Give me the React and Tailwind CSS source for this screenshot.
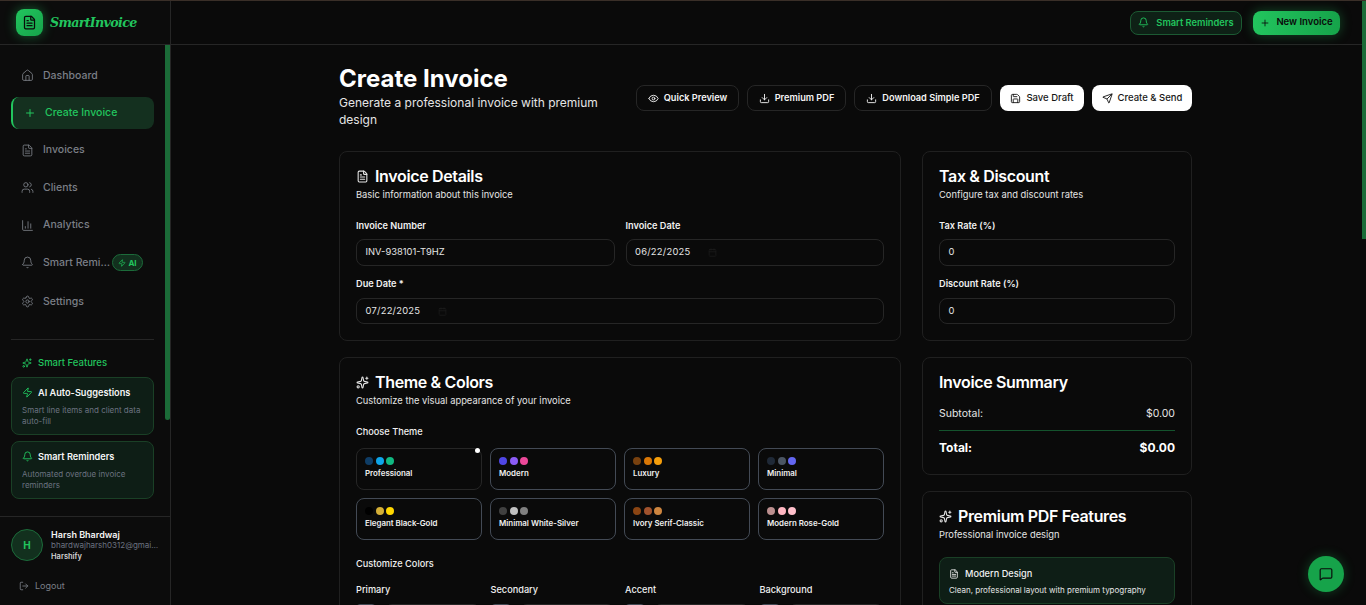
import React from "react";
import {
  Bell,
  ChartColumn,
  Calendar,
  Download,
  Eye,
  FileText,
  House,
  LogOut,
  MessageSquare,
  Plus,
  Save,
  Send,
  Settings,
  Sparkles,
  Users,
  Zap,
} from "lucide-react";

const navItems = [
  { label: "Dashboard", icon: House },
  { label: "Create Invoice", icon: Plus, active: true },
  { label: "Invoices", icon: FileText },
  { label: "Clients", icon: Users },
  { label: "Analytics", icon: ChartColumn },
  { label: "Smart Reminders", icon: Bell, badge: true },
  { label: "Settings", icon: Settings },
];

const themes = [
  { name: "Professional", colors: ["bg-[#0f3d66]", "bg-[#0ea5e9]", "bg-[#10b981]"], selected: true },
  { name: "Modern", colors: ["bg-[#4f46e5]", "bg-[#8b5cf6]", "bg-[#ec4899]"] },
  { name: "Luxury", colors: ["bg-[#78410f]", "bg-[#d97706]", "bg-[#f59e0b]"] },
  { name: "Minimal", colors: ["bg-[#1f2937]", "bg-[#4b5563]", "bg-[#6366f1]"] },
  { name: "Elegant Black-Gold", colors: ["bg-[#000000]", "bg-[#d4af37]", "bg-[#ffd700]"] },
  { name: "Minimal White-Silver", colors: ["bg-[#404040]", "bg-[#c0c0c0]", "bg-[#808080]"] },
  { name: "Ivory Serif-Classic", colors: ["bg-[#8b4513]", "bg-[#a0522d]", "bg-[#cd853f]"] },
  { name: "Modern Rose-Gold", colors: ["bg-[#bc8f8f]", "bg-[#ffb6c1]", "bg-[#ffc0cb]"] },
];

function Sidebar() {
  return (
    <aside className="flex h-full w-[171px] shrink-0 flex-col border-r border-[#262626] bg-[#0c0c0c]">
      <div className="flex h-[44px] shrink-0 items-center gap-[7px] border-b border-[#262626] pl-[16px]">
        <div className="flex h-[27px] w-[27px] items-center justify-center rounded-lg bg-gradient-to-br from-[#22c55e] to-[#16a34a] shadow-[0_0_12px_rgba(34,197,94,0.45)]">
          <FileText size={15} strokeWidth={2} className="text-[#0a0a0a]" />
        </div>
        <span className="font-['DejaVu_Serif'] text-[12.7px] font-bold italic tracking-[-0.7px] text-[#22c55e]">
          SmartInvoice
        </span>
      </div>

      <div className="relative min-h-0 flex-1 overflow-hidden">
        <div className="absolute right-0 top-0 h-[375px] w-[5px] rounded-b-full bg-[#1b6b38]" />
        <nav className="flex flex-col pl-[11px] pr-[16px] pt-[12px]">
          {navItems.map((item) => (
            <NavRow key={item.label} {...item} />
          ))}
        </nav>
        <div className="ml-[11px] mr-[16px] mt-[18px] border-t border-[#262626]" />
        <div className="flex items-center gap-[6px] pl-[22px] pt-[16px] text-[9.5px] font-medium text-[#22c55e]">
          <Sparkles size={10} />
          Smart Features
        </div>
        <div className="flex flex-col gap-[6px] pl-[11px] pr-[16px] pt-[7px]">
          <FeatureCard icon={Zap} title="AI Auto-Suggestions" text="Smart line items and client data auto-fill" />
          <FeatureCard icon={Bell} title="Smart Reminders" text="Automated overdue invoice reminders" />
        </div>
      </div>

      <div className="h-[89px] shrink-0 border-t border-[#262626] px-[11px] pt-[12px]">
        <div className="flex items-start gap-[8px]">
          <div className="flex h-[32px] w-[32px] shrink-0 items-center justify-center rounded-full border border-[#1c6b3a] bg-[#12301e] text-[10px] font-bold text-[#22c55e]">
            H
          </div>
          <div className="min-w-0 leading-[11px]">
            <p className="text-[9px] font-semibold text-[#f5f5f5]">Harsh Bhardwaj</p>
            <p className="w-[108px] truncate text-[8px] text-[#6b7280]">bhardwajharsh0312@gmail.com</p>
            <p className="text-[7.5px] font-semibold text-[#d4d4d4]">Harshify</p>
          </div>
        </div>
        <div className="flex items-center gap-[6px] pl-[8px] pt-[17px] text-[9px] text-[#7b7f87]">
          <LogOut size={10} />
          Logout
        </div>
      </div>
    </aside>
  );
}

function NavRow({ label, icon: Icon, active, badge }) {
  if (active) {
    return (
      <div className="my-[2.5px] flex h-[32px] items-center gap-[9px] rounded-lg border-l-2 border-[#22c55e] bg-[#14301f] pl-[11px] text-[10.5px] font-medium text-[#22c55e]">
        <Icon size={12} />
        {label}
      </div>
    );
  }
  return (
    <div className={`flex items-center gap-[9px] pl-[10px] text-[10.5px] font-medium text-[#7b7f87] ${badge ? "h-[39px] pb-[1.5px]" : "h-[37.5px]"}`}>
      <Icon size={13} strokeWidth={1.6} className="shrink-0" />
      <span className="max-w-[69px] truncate">{label}</span>
      {badge && (
        <span className="-ml-[9px] flex h-[17px] w-[31px] shrink-0 items-center justify-center gap-[2px] rounded-full border border-[#1c6b3a] bg-[#12301e] text-[8px] font-bold text-[#22c55e]">
          <Zap size={8} />
          AI
        </span>
      )}
    </div>
  );
}

function FeatureCard({ icon: Icon, title, text }) {
  return (
    <div className="h-[58px] rounded-lg border border-[#1a4026] bg-[#0e1e16] px-[10px] pt-[8px]">
      <div className="flex items-center gap-[5px] text-[9.2px] font-semibold text-[#f5f5f5]">
        <Icon size={11} className="text-[#22c55e]" />
        {title}
      </div>
      <p className="pt-[5px] text-[8px] leading-[11px] text-[#6b7280]">{text}</p>
    </div>
  );
}

function TopBar() {
  return (
    <header className="flex h-[44px] shrink-0 items-center justify-end gap-[11px] border-b border-[#262626] bg-[#0a0a0a] pr-[26px]">
      <button className="flex h-[24px] w-[112px] items-center justify-center gap-[7px] rounded-lg border border-[#1c5a33] bg-[#0e2116] text-[9.3px] font-semibold text-[#22c55e]">
        <Bell size={11} />
        Smart Reminders
      </button>
      <button className="flex h-[24px] w-[87px] items-center justify-center gap-[6px] rounded-lg bg-gradient-to-r from-[#22c55e] to-[#16a34a] text-[9.5px] font-semibold text-[#0a0a0a] shadow-[0_0_12px_rgba(34,197,94,0.35)]">
        <Plus size={10} />
        New Invoice
      </button>
    </header>
  );
}

function Card({ className = "", children }) {
  return (
    <section className={`rounded-lg border border-[#202020] bg-[#0a0a0a] px-[16px] pb-[16px] pt-[14px] ${className}`}>{children}</section>
  );
}

function CardTitle({ icon: Icon, title, sub }) {
  return (
    <div>
      <h2 className="flex items-center gap-[6px] text-[16px] font-semibold leading-[20px] tracking-[-0.35px] text-white">
        {Icon && <Icon size={13} className="text-[#e5e5e5]" />}
        {title}
      </h2>
      <p className="pt-[3px] text-[9.35px] leading-[12px] text-[#e5e5e5]">{sub}</p>
    </div>
  );
}

function Field({ label, value, date, first, className = "" }) {
  return (
    <div className={className}>
      <p className="text-[9.2px] font-semibold leading-[12px] text-[#f0f0f0]">{label}</p>
      <div
        className={`flex items-center gap-[18px] rounded-lg border border-[#262626] px-[8.5px] text-[9.4px] text-[#e5e5e5] ${
          first ? "mt-[7px] h-[27px]" : "mt-[8px] h-[26px]"
        } ${date ? "tracking-[0.25px]" : ""}`}
      >
        {value}
        {date && <Calendar size={9} className="text-[#1c1c1c]" />}
      </div>
    </div>
  );
}

function ToolButton({ icon: Icon, label, light, className }) {
  const tone = light
    ? "bg-white text-[#171717] font-medium text-[9.5px]"
    : "border border-[#262626] bg-[#0a0a0a] text-[#f5f5f5] font-semibold text-[9.2px]";
  return (
    <button className={`flex h-[26px] items-center justify-center gap-[5px] rounded-lg ${tone} ${className}`}>
      <Icon size={11} />
      {label}
    </button>
  );
}

function ThemeTile({ name, colors, selected }) {
  return (
    <div className={`relative h-[42px] rounded-lg border px-[8px] pt-[8px] ${selected ? "border-[#262626]" : "border-[#434a55]"}`}>
      {selected && <span className="absolute right-[1px] top-[-1px] h-[5px] w-[5px] rounded-full bg-white" />}
      <div className="flex gap-[2.5px]">
        {colors.map((c) => (
          <span key={c} className={`h-[8px] w-[8px] rounded-full ${c}`} />
        ))}
      </div>
      <p className="pt-[3px] text-[7.9px] font-semibold leading-[11px] text-[#f0f0f0]">{name}</p>
    </div>
  );
}

function ColorField({ label }) {
  return (
    <div>
      <p className="text-[9.2px] font-medium leading-[12px] text-[#f0f0f0]">{label}</p>
      <div className="mt-[8px] flex h-[26px] gap-[8px]">
        <div className="h-[26px] w-[20px] rounded border border-[#434a55] bg-[#1f2937]" />
        <div className="h-[26px] flex-1 rounded-lg border border-[#262626]" />
      </div>
    </div>
  );
}

export default function App() {
  return (
    <div className="flex h-[605px] w-[1366px] overflow-hidden border-t border-[#3a2f28] bg-[#0a0a0a] font-['Inter',sans-serif]">
      <Sidebar />
      <div className="relative flex min-w-0 flex-1 flex-col">
        <TopBar />
        <div className="absolute right-0 top-0 h-[238px] w-[4px] bg-[#1b6b38]" />
        <main className="min-h-0 flex-1 overflow-hidden pl-[168px] pt-[20px]">
          <div className="w-[853px]">
            <div className="flex h-[64px] items-center justify-between">
              <div className="w-[280px] self-start">
                <h1 className="text-[24px] font-bold leading-[28px] text-white">Create Invoice</h1>
                <p className="mt-px text-[12px] leading-[17px] text-[#e5e5e5]">Generate a professional invoice with premium design</p>
              </div>
              <div className="mt-[2px] flex gap-[8px]">
                <ToolButton icon={Eye} label="Quick Preview" className="w-[103px]" />
                <ToolButton icon={Download} label="Premium PDF" className="w-[99px]" />
                <ToolButton icon={Download} label="Download Simple PDF" className="w-[138px]" />
                <ToolButton icon={Save} label="Save Draft" light className="w-[84px]" />
                <ToolButton icon={Send} label="Create & Send" light className="w-[100px]" />
              </div>
            </div>

            <div className="mt-[22px] grid grid-cols-[562px_270px] gap-x-[21px]">
              <div className="flex flex-col gap-[16px]">
                <Card className="h-[190px]">
                  <CardTitle icon={FileText} title="Invoice Details" sub="Basic information about this invoice" />
                  <div className="mt-[19px] grid grid-cols-2 gap-x-[11px] gap-y-[12px]">
                    <Field label="Invoice Number" value="INV-938101-T9HZ" first />
                    <Field label="Invoice Date" value="06/22/2025" date first />
                    <Field label="Due Date *" value="07/22/2025" date className="col-span-2" />
                  </div>
                </Card>
                <Card>
                  <CardTitle icon={Sparkles} title="Theme & Colors" sub="Customize the visual appearance of your invoice" />
                  <p className="mt-[19px] text-[9.2px] font-medium leading-[12px] text-[#f0f0f0]">Choose Theme</p>
                  <div className="mt-[10px] grid grid-cols-4 gap-[8px]">
                    {themes.map((t) => (
                      <ThemeTile key={t.name} {...t} />
                    ))}
                  </div>
                  <p className="mt-[18px] text-[9.2px] font-medium leading-[12px] text-[#f0f0f0]">Customize Colors</p>
                  <div className="mt-[14px] grid grid-cols-4 gap-[10px]">
                    <ColorField label="Primary" />
                    <ColorField label="Secondary" />
                    <ColorField label="Accent" />
                    <ColorField label="Background" />
                  </div>
                </Card>
              </div>

              <div className="flex flex-col gap-[16px]">
                <Card className="h-[190px]">
                  <CardTitle title="Tax & Discount" sub="Configure tax and discount rates" />
                  <div className="mt-[19px] flex flex-col gap-[12px]">
                    <Field label="Tax Rate (%)" value="0" first />
                    <Field label="Discount Rate (%)" value="0" />
                  </div>
                </Card>
                <Card className="h-[118px]">
                  <h2 className="text-[16px] font-semibold leading-[20px] tracking-[-0.35px] text-white">Invoice Summary</h2>
                  <div className="mt-[14px] flex justify-between border-b border-[#14532d] pb-[8px] text-[10.5px] text-[#e5e5e5]">
                    <span>Subtotal:</span>
                    <span>$0.00</span>
                  </div>
                  <div className="mt-[8px] flex items-center justify-between font-bold text-white">
                    <span className="text-[12px]">Total:</span>
                    <span className="text-[12px]">$0.00</span>
                  </div>
                </Card>
                <Card>
                  <CardTitle icon={Sparkles} title="Premium PDF Features" sub="Professional invoice design" />
                  <div className="mt-[16px] h-[47px] rounded-lg border border-[#1a4026] bg-[#0e1e16] px-[9px] pt-[9px]">
                    <div className="flex items-center gap-[6px] text-[9.2px] font-medium text-[#f0f0f0]">
                      <FileText size={10} />
                      Modern Design
                    </div>
                    <p className="pt-[3px] text-[8px] text-[#e5e5e5]">Clean, professional layout with premium typography</p>
                  </div>
                </Card>
              </div>
            </div>
          </div>
        </main>
        <button className="absolute bottom-[13px] right-[22px] flex h-[36px] w-[36px] items-center justify-center rounded-full bg-[#16a34a] text-[#0a0a0a] shadow-[0_0_12px_rgba(34,197,94,0.3)]">
          <MessageSquare size={14} />
        </button>
      </div>
    </div>
  );
}
